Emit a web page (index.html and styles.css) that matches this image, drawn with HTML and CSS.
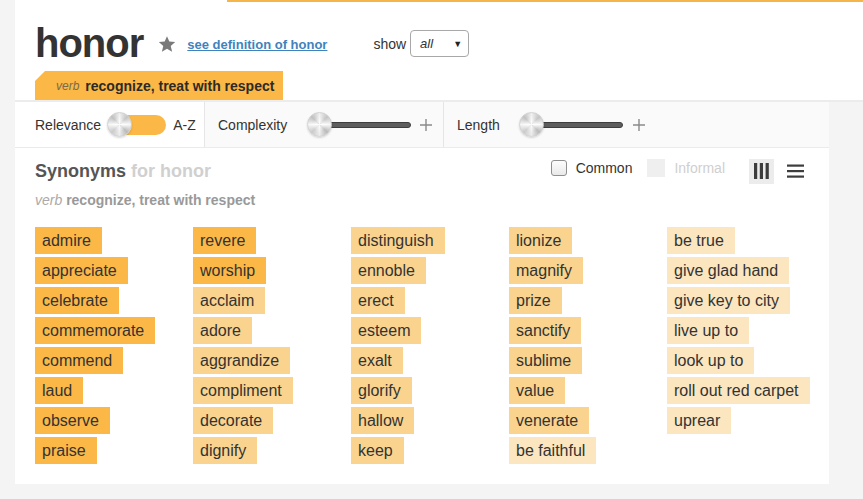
FILE: index.html
```html
<!DOCTYPE html>
<html lang="en">
<head>
<meta charset="utf-8">
<title>honor synonyms</title>
<link rel="stylesheet" href="styles.css">
</head>
<body>
<div class="page">
  <div class="head">
    <div class="title-row">
      <h1 class="word">honor</h1>
      <svg class="star" width="18" height="18" viewBox="0 0 24 24"><path d="M12 1.5l3.1 7.2 7.8.7-5.9 5.2 1.8 7.7L12 18.3l-6.8 4 1.8-7.7-5.9-5.2 7.8-.7z" fill="#7a7a7a"/></svg>
      <a class="def-link" href="#">see definition of honor</a>
      <span class="show-label">show</span>
      <div class="select"><span class="sel-val">all</span><span class="sel-arrow">▼</span></div>
    </div>
    <div class="sense-tab"><span class="pos">verb</span><span class="sense">recognize, treat with respect</span></div>
  </div>

  <div class="controls">
    <div class="ctrl ctrl-sort">
      <span class="ctrl-label">Relevance</span>
      <span class="knob"></span>
      <span class="pill"></span>
      <span class="ctrl-label az">A-Z</span>
    </div>
    <div class="ctrl ctrl-complex">
      <span class="ctrl-label">Complexity</span>
      <span class="knob knob-slider"></span>
      <span class="track"></span>
      <svg class="plus" width="12" height="12" viewBox="0 0 12 12"><path d="M6 0v12M0 6h12" stroke="#8a8a8a" stroke-width="1.4"/></svg>
    </div>
    <div class="ctrl ctrl-length">
      <span class="ctrl-label">Length</span>
      <span class="knob knob-slider"></span>
      <span class="track"></span>
      <svg class="plus" width="12" height="12" viewBox="0 0 12 12"><path d="M6 0v12M0 6h12" stroke="#8a8a8a" stroke-width="1.4"/></svg>
    </div>
  </div>

  <div class="results">
    <div class="results-head">
      <h2 class="res-title">Synonyms <span class="res-for">for honor</span></h2>
      <div class="filters">
        <span class="checkbox"></span>
        <span class="filter-label">Common</span>
        <span class="checkbox disabled"></span>
        <span class="filter-label disabled">Informal</span>
        <span class="view-btn active">
          <svg width="15" height="16" viewBox="0 0 15 16"><rect x="0" y="0" width="3.2" height="16" fill="#3d3d3d"/><rect x="5.8" y="0" width="3.2" height="16" fill="#3d3d3d"/><rect x="11.6" y="0" width="3.2" height="16" fill="#3d3d3d"/></svg>
        </span>
        <span class="view-btn">
          <svg width="17" height="14" viewBox="0 0 17 14"><rect x="0" y="0.5" width="17" height="2.2" fill="#3d3d3d"/><rect x="0" y="6" width="17" height="2.2" fill="#3d3d3d"/><rect x="0" y="11.5" width="17" height="2.2" fill="#3d3d3d"/></svg>
        </span>
      </div>
    </div>
    <div class="sense-line"><span class="pos">verb</span> <span class="sense">recognize, treat with respect</span></div>

    <div class="cols">
      <ul class="col">
        <li class="syn t1">admire</li>
        <li class="syn t1">appreciate</li>
        <li class="syn t1">celebrate</li>
        <li class="syn t1">commemorate</li>
        <li class="syn t1">commend</li>
        <li class="syn t1">laud</li>
        <li class="syn t1">observe</li>
        <li class="syn t1">praise</li>
      </ul>
      <ul class="col">
        <li class="syn t1">revere</li>
        <li class="syn t1">worship</li>
        <li class="syn t2">acclaim</li>
        <li class="syn t2">adore</li>
        <li class="syn t2">aggrandize</li>
        <li class="syn t2">compliment</li>
        <li class="syn t2">decorate</li>
        <li class="syn t2">dignify</li>
      </ul>
      <ul class="col">
        <li class="syn t2">distinguish</li>
        <li class="syn t2">ennoble</li>
        <li class="syn t2">erect</li>
        <li class="syn t2">esteem</li>
        <li class="syn t2">exalt</li>
        <li class="syn t2">glorify</li>
        <li class="syn t2">hallow</li>
        <li class="syn t2">keep</li>
      </ul>
      <ul class="col">
        <li class="syn t2">lionize</li>
        <li class="syn t2">magnify</li>
        <li class="syn t2">prize</li>
        <li class="syn t2">sanctify</li>
        <li class="syn t2">sublime</li>
        <li class="syn t2">value</li>
        <li class="syn t2">venerate</li>
        <li class="syn t3">be faithful</li>
      </ul>
      <ul class="col">
        <li class="syn t3">be true</li>
        <li class="syn t3">give glad hand</li>
        <li class="syn t3">give key to city</li>
        <li class="syn t3">live up to</li>
        <li class="syn t3">look up to</li>
        <li class="syn t3">roll out red carpet</li>
        <li class="syn t3">uprear</li>
      </ul>
    </div>
  </div>
</div>
</body>
</html>
```

FILE: styles.css
```css
* { box-sizing: border-box; }

html, body {
  margin: 0;
  padding: 0;
  background: #f4f4f4;
  font-family: "Liberation Sans", Arial, sans-serif;
  color: #333;
  height: 100%;
  overflow: hidden;
}

.page {
  margin-left: 15px;
}

/* ---------- header ---------- */
.head {
  height: 102px;
  background:
    linear-gradient(#f5b548, #f5b548) no-repeat 212px 0 / 100% 2px,
    #fff;
  border-bottom: 2px solid #ececec;
  padding: 21px 0 0 20px;
}

.title-row {
  display: flex;
  align-items: center;
  height: 44px;
}

.word {
  margin: 0;
  font-size: 40px;
  line-height: 44px;
  font-weight: bold;
  color: #333;
  letter-spacing: -1px;
}

.star {
  margin-left: 15px;
  margin-top: 2px;
  display: block;
}

.def-link {
  margin-left: 11px;
  font-size: 13px;
  font-weight: bold;
  color: #3f83bd;
  text-decoration: underline;
  margin-top: 2px;
}

.show-label {
  margin-left: 46px;
  font-size: 14px;
  color: #333;
  margin-top: 2px;
}

.select {
  margin-left: 4px;
  width: 59px;
  height: 27px;
  border: 1px solid #a8a8a8;
  border-radius: 4px;
  display: flex;
  align-items: center;
  justify-content: space-between;
  padding: 0 6px 0 9px;
  margin-top: 1px;
}

.sel-val {
  font-style: italic;
  font-size: 13px;
  color: #333;
}

.sel-arrow {
  font-size: 9px;
  color: #222;
}

.sense-tab {
  margin-top: 6px;
  width: 248px;
  height: 29px;
  background: #fbb846;
  clip-path: polygon(10px 0, 100% 0, 100% 100%, 0 100%, 0 10px);
  display: flex;
  align-items: center;
  padding-left: 21px;
  padding-top: 1px;
}

.sense-tab .pos {
  font-style: italic;
  font-size: 12px;
  color: #7a6a4a;
  margin-right: 6px;
}

.sense-tab .sense {
  font-weight: bold;
  font-size: 14px;
  color: #2d2a25;
}

/* ---------- controls ---------- */
.controls {
  width: 814px;
  height: 46px;
  display: flex;
  background: #fafafa;
  border-bottom: 1px solid #ebebeb;
}

.ctrl {
  display: flex;
  align-items: center;
  border-right: 1px solid #e6e6e6;
  height: 100%;
}

.ctrl-sort {
  width: 190px;
  padding-left: 20px;
  background: #fff;
}

.ctrl-complex {
  width: 239px;
  padding-left: 13px;
}

.ctrl-length {
  flex: 1;
  padding-left: 13px;
  border-right: none;
}

.ctrl-label {
  font-size: 14px;
  color: #333;
}

.knob {
  position: relative;
  z-index: 1;
  width: 25px;
  height: 25px;
  border-radius: 50%;
  border: 1px solid #d2d2d2;
  background:
    radial-gradient(circle at 50% 50%, rgba(255,255,255,0.55) 0 18%, rgba(255,255,255,0) 45%, rgba(0,0,0,0.06) 100%),
    conic-gradient(#f4f4f4, #c9c9c9, #fbfbfb, #bdbdbd, #efefef, #cfcfcf, #fafafa, #c4c4c4, #f4f4f4);
  box-shadow: 0 1px 2px rgba(0,0,0,0.15);
  flex: none;
}

.ctrl-sort .knob { margin-left: 6px; }

.pill {
  width: 49px;
  height: 20px;
  margin-left: -15px;
  border-radius: 10px;
  background: #fbb846;
  flex: none;
}

.az { margin-left: 7px; }

.ctrl-complex .knob { margin-left: 20px; }
.ctrl-length .knob { margin-left: 19px; }

.track {
  height: 6px;
  width: 91px;
  margin-left: -12px;
  border-radius: 3px;
  background: #5d5d5d;
  border: 1px solid #3e3e3e;
  flex: none;
}

.ctrl-length .track {
  width: 92px;
  margin-left: -13px;
}

.plus {
  margin-left: 9px;
  display: block;
}

.ctrl-length .plus { margin-left: 10px; }

/* ---------- results ---------- */
.results {
  width: 814px;
  height: 336px;
  background: #fff;
  padding: 10px 25px 0 20px;
}

.results-head {
  display: flex;
  justify-content: space-between;
  align-items: center;
  height: 26px;
}

.res-title {
  margin: 0;
  font-size: 18px;
  font-weight: bold;
  color: #555;
}

.res-for {
  color: #d0d0d0;
}

.filters {
  display: flex;
  align-items: center;
}

.checkbox {
  width: 16px;
  height: 16px;
  border: 1px solid #8f8f8f;
  border-radius: 3px;
  background: linear-gradient(#fdfdfd, #e9e9e9);
  margin-right: 9px;
  margin-left: 1px;
  margin-bottom: 7px;
}

.checkbox.disabled {
  width: 18px;
  height: 18px;
  border: none;
  border-radius: 0;
  background: #efefef;
  margin-left: 15px;
}

.filter-label {
  font-size: 14px;
  color: #333;
  margin-bottom: 7px;
}

.filter-label.disabled {
  color: #cfcfcf;
}

.view-btn {
  width: 25px;
  height: 25px;
  display: flex;
  align-items: center;
  justify-content: center;
}

.view-btn.active {
  background: #ececec;
  margin-left: 24px;
}

.view-btn + .view-btn {
  margin-left: 13px;
  width: 17px;
}

.sense-line {
  margin-top: 8px;
  font-size: 14px;
  line-height: 17px;
}

.sense-line .pos {
  font-style: italic;
  color: #aaa;
}

.sense-line .sense {
  font-weight: bold;
  color: #999;
}

.cols {
  display: grid;
  grid-template-columns: repeat(5, 158px);
  margin-top: 18px;
}

.col {
  list-style: none;
  margin: 0;
  padding: 0;
  display: flex;
  flex-direction: column;
  align-items: flex-start;
  gap: 3px;
}

.syn {
  height: 27px;
  line-height: 27px;
  font-size: 16px;
  color: #333;
  padding: 0 11px 0 7px;
  white-space: nowrap;
}

.t1 { background: #fbb846; }
.t2 { background: #fad38e; }
.t3 { background: #fbe6c0; }
```
